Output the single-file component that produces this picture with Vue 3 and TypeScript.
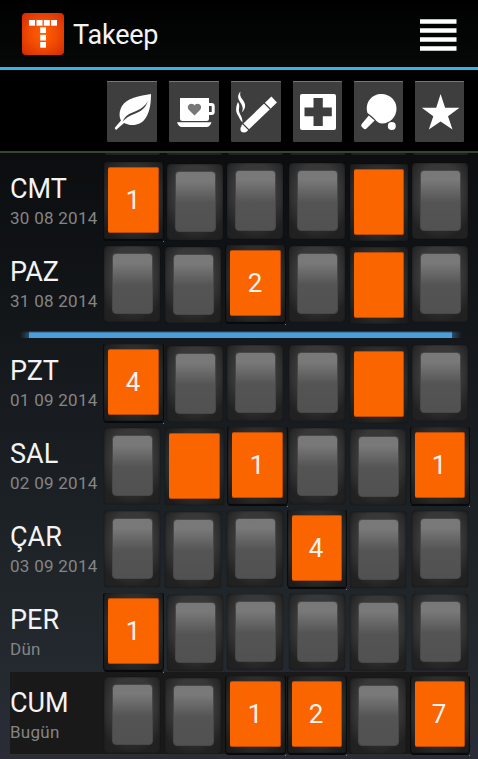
<script setup lang="ts">
interface Day {
  name: string
  date: string
  cells: (string | null)[]
  today?: boolean
  endOfWeek?: boolean
}

// null: nothing logged, '': logged without a count
const days: Day[] = [
  { name: 'CMT', date: '30 08 2014', cells: ['1', null, null, null, '', null] },
  { name: 'PAZ', date: '31 08 2014', cells: [null, null, '2', null, '', null], endOfWeek: true },
  { name: 'PZT', date: '01 09 2014', cells: ['4', null, null, null, '', null] },
  { name: 'SAL', date: '02 09 2014', cells: [null, '', '1', null, null, '1'] },
  { name: 'ÇAR', date: '03 09 2014', cells: [null, null, null, '4', null, null] },
  { name: 'PER', date: 'Dün', cells: ['1', null, null, null, null, null] },
  { name: 'CUM', date: 'Bugün', cells: [null, null, '1', '2', null, '7'], today: true },
]

function cellClass(day: Day, i: number) {
  const value = day.cells[i]
  return {
    lit: value !== null,
    blank: value === '',
    counted: !!value,
    pushed: (i === 1 || i === 2) && day.cells[i - 1] !== null,
  }
}
</script>

<template>
  <div class="screen">
    <header class="bar">
      <svg class="logo" viewBox="0 0 42 42">
        <defs>
          <radialGradient id="glow" cx=".5" cy=".5" r=".68">
            <stop offset="0" stop-color="#ff6200" />
            <stop offset=".5" stop-color="#f04a03" />
            <stop offset="1" stop-color="#d42c05" />
          </radialGradient>
        </defs>
        <rect width="42" height="42" rx="4" fill="url(#glow)" />
        <g fill="#fff">
          <rect x="7" y="7" width="6" height="5.7" />
          <rect x="14.5" y="7" width="6" height="5.7" />
          <rect x="21.8" y="7" width="6" height="5.7" />
          <rect x="29" y="7" width="6" height="5.7" />
          <rect x="18.2" y="14.3" width="5.8" height="5.7" />
          <rect x="18.2" y="21.8" width="5.8" height="5.7" />
          <rect x="18.2" y="29" width="5.8" height="5.7" />
        </g>
      </svg>
      <h1>Takeep</h1>
      <svg class="menu" viewBox="0 0 37 33">
        <path d="M0 .3h36.500v4.400H0zM0 9.300h36.500v4.400H0zM0 18.300h36.500v4.400H0zM0 27.300h36.500v4.400H0z" fill="#fff" />
      </svg>
    </header>

    <nav class="habits">
      <svg class="habit" viewBox="0 0 50 61">
        <path d="M44 13C33 14.500 19 17.500 15 25C12 30 12 36 14 39.500L7.600 47L9 49L17 42C24 45.500 34 45 39 36.500C43 30 44 22 44 13Z" fill="#fff" />
        <path d="M15.500 41C19 33 23 33 28 30.500C34 28 38 25 41 20C38 29 31 31.500 26 33.500C21 35.500 19 37 15.500 41Z" fill="#3e3e3e" />
      </svg>
      <svg class="habit" viewBox="0 0 50 61">
        <path d="M11 17h29v20.500q0 2.500-2.500 2.500h-24q-2.500 0-2.500-2.500zM8 41.300h34.500q-1.500 4.700-5 4.700H13q-3.500 0-5-4.700z" fill="#fff" />
        <path d="M39 23.500h3.500q1.700 0 1.700 1.700v5.600q0 1.700-1.700 1.700H39" fill="none" stroke="#fff" stroke-width="3" />
        <path d="M25.500 34.500L20 29C17.500 26 19.500 22.700 22.500 22.700C24 22.700 25 23.500 25.500 24.500C26 23.500 27 22.700 28.500 22.700C31.500 22.700 33.500 26 31 29Z" fill="#777" />
      </svg>
      <svg class="habit" viewBox="0 0 50 61">
        <path d="M13 47.500L43.200 18.500" stroke="#fff" stroke-width="8" />
        <circle cx="13" cy="48" r="3.600" fill="#fff" />
        <path d="M32.700 21.500L39.200 28M11.500 42.500L18.500 49.500" stroke="#3e3e3e" stroke-width="1.100" />
        <path d="M9.500 10.500C5.500 15 7 18 10 22.500C12.500 27 11.800 29 10.800 31.500C15.800 27 14.500 22 11.500 18.500C9 15.500 8.800 13.500 9.500 10.500Z" fill="#fff" />
        <path d="M7 21C4.500 26 4.500 31 7 34.500C8.500 37 9 39 11.500 41.500C11.800 36 8.500 33.500 8 30C7.500 27 9.500 25 7 21Z" fill="#fff" />
      </svg>
      <svg class="habit narrow" viewBox="0 0 49 61">
        <rect x="7" y="13" width="36" height="36" rx="2" fill="#fff" />
        <path d="M20.500 17h9.300v9.500h9v8.700h-9V45h-9.300v-9.800h-9v-8.700h9z" fill="#3e3e3e" />
      </svg>
      <svg class="habit narrow" viewBox="0 0 49 61">
        <path d="M13.500 32C10.500 21 18 13 27.500 13C36 13 42.500 19.500 42.500 27.500C42.500 36 36 42.500 28 42.500C25.500 42.500 24 41.500 22.500 40C19.500 37 17.500 34.500 13.500 32Z" fill="#fff" />
        <path d="M14.800 34.500L20.600 39.500L12.500 47.500Q11 49 9.500 47.500L7.700 45.700Q6.500 44.500 7.700 43Z" fill="#fff" />
        <circle cx="37.800" cy="45" r="4" fill="#fff" />
      </svg>
      <svg class="habit narrow" viewBox="0 0 49 61">
        <path d="M25.600 13L30.100 26.700H44.500L33 35.300L37.500 48.500L25.600 40.500L13.800 48.500L18.300 35.300L6.800 26.700H21.200Z" fill="#fff" />
      </svg>
    </nav>

    <main>
      <div class="peek"><i v-for="n in 6" :key="n" /></div>
      <section v-for="day in days" :key="day.name" class="day" :class="{ today: day.today, week: day.endOfWeek }">
        <div class="label">
          <strong>{{ day.name }}</strong>
          <span>{{ day.date }}</span>
        </div>
        <div v-for="(value, i) in day.cells" :key="i" class="slot">
          <div class="key" :class="cellClass(day, i)">
            <b>{{ value }}</b>
          </div>
        </div>
      </section>
    </main>
  </div>
</template>

<style>
body {
  margin: 0;
  background: #000;
}
</style>

<style scoped>
.screen {
  box-sizing: border-box;
  width: 478px;
  height: 759px;
  overflow: hidden;
  background: linear-gradient(#000 0, #0b0d0f 153px, #181c20 420px, #20262a 600px, #2a2d37 759px);
  color: #f3f3f3;
  font-family: Roboto, sans-serif;
}
.bar {
  box-sizing: border-box;
  display: flex;
  align-items: center;
  height: 70px;
  padding: 0 21px 0 22px;
  border-bottom: 3px solid #33b5e5;
  background: linear-gradient(#000, #060908);
}
.logo {
  width: 42px;
  height: 42px;
  margin-top: 1px;
}
h1 {
  flex: 1;
  margin: 3px 0 0 9px;
  font-size: 27px;
  font-weight: 400;
  line-height: 32px;
  letter-spacing: -0.2px;
}
.menu {
  width: 37px;
  height: 33px;
  margin-top: 3px;
}
.habits {
  box-sizing: border-box;
  display: grid;
  grid-template-columns: 62px 62px 62px 61px 61px 50px;
  height: 83px;
  padding: 11px 0 0 107px;
  border-bottom: 2px solid #37452f;
  background: #000;
}
.habit {
  box-sizing: border-box;
  width: 50px;
  height: 61px;
  border-radius: 1px;
  background: #3e3e3e;
  box-shadow: inset 0 1px #777;
}
.narrow {
  width: 49px;
}
.peek {
  display: grid;
  grid-template-columns: repeat(6, 61.5px);
  height: 5px;
  padding-left: 105px;
}
.peek i {
  width: 55px;
  height: 2px;
  border-radius: 0 0 3px 3px;
  background: #202022;
}
.day {
  display: grid;
  grid-template-columns: 94px 61px 62px 61.5px 61.5px 61.5px 61.5px;
  width: 463px;
  height: 83px;
  margin-left: 10px;
}
.week {
  position: relative;
  margin-bottom: 16px;
}
.week::after {
  content: '';
  position: absolute;
  left: 10px;
  top: 90px;
  width: 442px;
  height: 7px;
  background: linear-gradient(90deg, transparent, #4a9fdb66 9px, #4a9fdb 9px, #4a9fdb 432px, #4a9fdb66 432px, transparent);
  mask-image: linear-gradient(transparent, #000 2px);
}
.today {
  width: 458px;
  height: 82px;
  background: #191919;
  box-shadow: 0 1px #303030;
}
.label {
  display: flex;
  flex-direction: column;
  padding-top: 15px;
}
.label strong {
  font-size: 27px;
  font-weight: 400;
  line-height: 32px;
}
.label span {
  color: #858585;
  font-size: 17px;
  line-height: 26px;
  letter-spacing: 0.27px;
  white-space: nowrap;
}
.slot {
  padding-top: 5px;
}
.slot:nth-child(3) .key:not(.lit) {
  margin-top: 1px;
}
.slot:nth-child(6) .key:not(.lit) {
  margin-top: 1px;
}
.key {
  box-sizing: border-box;
  width: 56px;
  height: 76px;
  padding: 7px 7px 8px 8px;
  border-radius: 4px;
  background: radial-gradient(ellipse 35px 48px at 50% 38%, #383838 60%, #212121 100%);
  box-shadow: inset 0 0 2px #141414, 0 0 1px #0a0a0a;
}
.key b {
  display: block;
  box-sizing: border-box;
  height: 61px;
  border: 1px solid #484848;
  border-radius: 4px;
  background: linear-gradient(#787878 0, #797979 9px, #545454 31px, #515151);
  font-size: 26px;
  font-weight: 400;
  text-align: center;
}
.pushed {
  margin-left: 2px;
}
.lit {
  width: 59px;
  height: 77px;
  margin-top: -1px;
  padding: 5px 4px 6px 4px;
  border-radius: 2px;
  background: radial-gradient(ellipse 38px 50px at 50% 45%, #303030 60%, #1c1c1c 100%);
}
.lit b {
  width: 51px;
  height: 66px;
  border: 1px solid #b84b05;
  border-width: 1px 1px 1px 0;
  border-radius: 2px;
  background: #fb6500;
  line-height: 65px;
}
.lit.blank {
  margin-top: 1px;
}
.slot:nth-child(3) .lit.blank {
  margin-top: 0;
}
.slot:nth-child(4) .lit {
  margin-left: -1px;
}
.slot:nth-child(4) .lit.pushed {
  margin-left: 1px;
}
.slot:nth-child(n + 5) .lit {
  width: 58px;
}
.slot:nth-child(n + 5) .lit b {
  width: 50px;
}
.slot:nth-child(5) .lit,
.slot:nth-child(7) .lit {
  margin-left: -1px;
}
.counted {
  position: relative;
  box-shadow: inset 0 0 1px #080808, -1px 0 #0a0b0c, 1px 0 #090a0b, 0 2px #08090a;
}
.counted::after {
  content: '';
  position: absolute;
  right: -1px;
  bottom: -3px;
  width: 1px;
  height: 1px;
  background: #12a5a5;
}
</style>
